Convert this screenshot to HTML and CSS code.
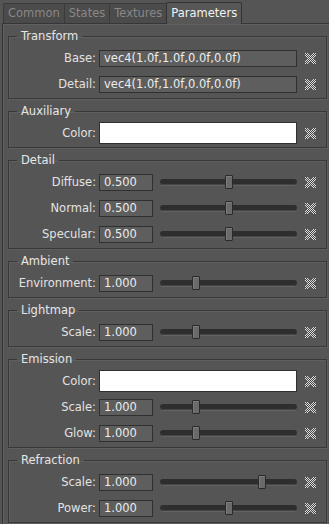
FILE: index.html
```html
<!DOCTYPE html>
<html lang="en">
<head>
  <meta charset="UTF-8">
  <title>Material Parameters</title>
  <link rel="stylesheet" href="styles.css">
</head>
<body>
  <svg width="0" height="0" class="defs">
    <defs>
      <pattern id="dither" width="2" height="2" patternUnits="userSpaceOnUse">
        <rect width="2" height="2" fill="#444444"/>
        <rect width="1" height="1" fill="#dcdcdc"/>
        <rect x="1" y="1" width="1" height="1" fill="#dcdcdc"/>
      </pattern>
      <symbol id="clear" viewBox="0 0 11 11">
        <path d="M1.5 1.5L9.5 9.5M9.5 1.5L1.5 9.5" stroke="url(#dither)" stroke-width="3" stroke-linecap="square" fill="none"/>
      </symbol>
    </defs>
  </svg>

  <div class="tabs">
    <div class="tab">Common</div>
    <div class="tab">States</div>
    <div class="tab">Textures</div>
    <div class="tab active">Parameters</div>
  </div>

  <div class="pane">
    <fieldset class="group">
      <legend>Transform</legend>
      <div class="row">
        <label>Base:</label>
        <div class="field wide">vec4(1.0f,1.0f,0.0f,0.0f)</div>
        <svg class="clear"><use href="#clear"/></svg>
      </div>
      <div class="row">
        <label>Detail:</label>
        <div class="field wide">vec4(1.0f,1.0f,0.0f,0.0f)</div>
        <svg class="clear"><use href="#clear"/></svg>
      </div>
    </fieldset>

    <fieldset class="group">
      <legend>Auxiliary</legend>
      <div class="row">
        <label>Color:</label>
        <div class="swatch"></div>
        <svg class="clear"><use href="#clear"/></svg>
      </div>
    </fieldset>

    <fieldset class="group">
      <legend>Detail</legend>
      <div class="row">
        <label>Diffuse:</label>
        <div class="field">0.500</div>
        <div class="slider"><span class="thumb" style="--pos:0.5"></span></div>
        <svg class="clear"><use href="#clear"/></svg>
      </div>
      <div class="row">
        <label>Normal:</label>
        <div class="field">0.500</div>
        <div class="slider"><span class="thumb" style="--pos:0.5"></span></div>
        <svg class="clear"><use href="#clear"/></svg>
      </div>
      <div class="row">
        <label>Specular:</label>
        <div class="field">0.500</div>
        <div class="slider"><span class="thumb" style="--pos:0.5"></span></div>
        <svg class="clear"><use href="#clear"/></svg>
      </div>
    </fieldset>

    <fieldset class="group">
      <legend>Ambient</legend>
      <div class="row">
        <label>Environment:</label>
        <div class="field">1.000</div>
        <div class="slider"><span class="thumb" style="--pos:0.25"></span></div>
        <svg class="clear"><use href="#clear"/></svg>
      </div>
    </fieldset>

    <fieldset class="group">
      <legend>Lightmap</legend>
      <div class="row">
        <label>Scale:</label>
        <div class="field">1.000</div>
        <div class="slider"><span class="thumb" style="--pos:0.25"></span></div>
        <svg class="clear"><use href="#clear"/></svg>
      </div>
    </fieldset>

    <fieldset class="group">
      <legend>Emission</legend>
      <div class="row">
        <label>Color:</label>
        <div class="swatch"></div>
        <svg class="clear"><use href="#clear"/></svg>
      </div>
      <div class="row">
        <label>Scale:</label>
        <div class="field">1.000</div>
        <div class="slider"><span class="thumb" style="--pos:0.25"></span></div>
        <svg class="clear"><use href="#clear"/></svg>
      </div>
      <div class="row">
        <label>Glow:</label>
        <div class="field">1.000</div>
        <div class="slider"><span class="thumb" style="--pos:0.25"></span></div>
        <svg class="clear"><use href="#clear"/></svg>
      </div>
    </fieldset>

    <fieldset class="group">
      <legend>Refraction</legend>
      <div class="row">
        <label>Scale:</label>
        <div class="field">1.000</div>
        <div class="slider"><span class="thumb" style="--pos:0.76"></span></div>
        <svg class="clear"><use href="#clear"/></svg>
      </div>
      <div class="row">
        <label>Power:</label>
        <div class="field">1.000</div>
        <div class="slider"><span class="thumb" style="--pos:0.5"></span></div>
        <svg class="clear"><use href="#clear"/></svg>
      </div>
    </fieldset>
  </div>
</body>
</html>
```

FILE: styles.css
```css
body {
  font-family: 'DejaVu Sans', sans-serif;
  font-size: 11.5px;
  margin: 0;
  padding: 0;
  background-color: #555555;
  color: #e2e2e2;
  overflow: hidden;
}

.defs {
  position: absolute;
}

.tabs {
  display: flex;
  align-items: flex-end;
  padding: 2px 0 0 3px;
  height: 21px;
}

.tab {
  height: 19px;
  line-height: 19px;
  padding: 0 4px;
  background-color: #4b4b4b;
  color: #888888;
  border: 1px solid #3a3a3a;
  border-bottom: none;
  margin-right: -1px;
  border-radius: 2px 2px 0 0;
}

.tab.active {
  height: 21px;
  line-height: 21px;
  margin-bottom: -1px;
  position: relative;
  background-color: #575757;
  color: #f2f2f2;
  border-color: #333333;
  padding: 0 4px;
}

.pane {
  margin-left: 2px;
  border-top: 1px solid #363636;
  border-left: 1px solid #363636;
  box-shadow: inset 1px 1px 0 #606060;
  padding: 5px 0 2px 5px;
}

.group {
  margin: 0 0 5px 0;
  padding: 4px 0 3px 0;
  width: 317px;
  border: 1px solid #383838;
  box-shadow: inset 1px 1px 0 #5f5f5f, 1px 1px 0 #5f5f5f;
  min-width: 0;
}

.group legend {
  margin-left: 8px;
  padding: 0 4px;
  height: 14px;
  line-height: 14px;
  color: #e6e6e6;
}

.row {
  display: flex;
  align-items: center;
  height: 22px;
  margin-bottom: 4px;
}

.row:last-child {
  margin-bottom: 0;
}

.row label {
  width: 87px;
  text-align: right;
  margin-right: 3px;
  flex-shrink: 0;
}

.field {
  box-sizing: border-box;
  width: 54px;
  height: 17px;
  line-height: 15px;
  padding: 0 4px;
  background-color: #5e5e5e;
  border: 1px solid #303030;
  color: #ececec;
  white-space: nowrap;
  overflow: hidden;
}

.field.wide {
  width: 198px;
}

.swatch {
  box-sizing: border-box;
  width: 198px;
  height: 22px;
  background-color: #ffffff;
  border: 1px solid #303030;
}

.slider {
  position: relative;
  width: 137px;
  height: 6px;
  margin-left: 7px;
  background-color: #2e2e2e;
  border-radius: 3px;
  box-shadow: inset 0 -1px 0 #454545, 0 1px 0 #626262;
}

.thumb {
  position: absolute;
  top: -4px;
  left: calc(var(--pos) * (100% - 8px));
  box-sizing: border-box;
  width: 8px;
  height: 14px;
  background-color: #6a6a6a;
  border: 1px solid #2a2a2a;
  border-radius: 1px;
  box-shadow: inset 1px 1px 0 #7c7c7c;
}

.clear {
  width: 11px;
  height: 11px;
  margin-left: 8px;
  flex-shrink: 0;
  shape-rendering: crispEdges;
}
```
